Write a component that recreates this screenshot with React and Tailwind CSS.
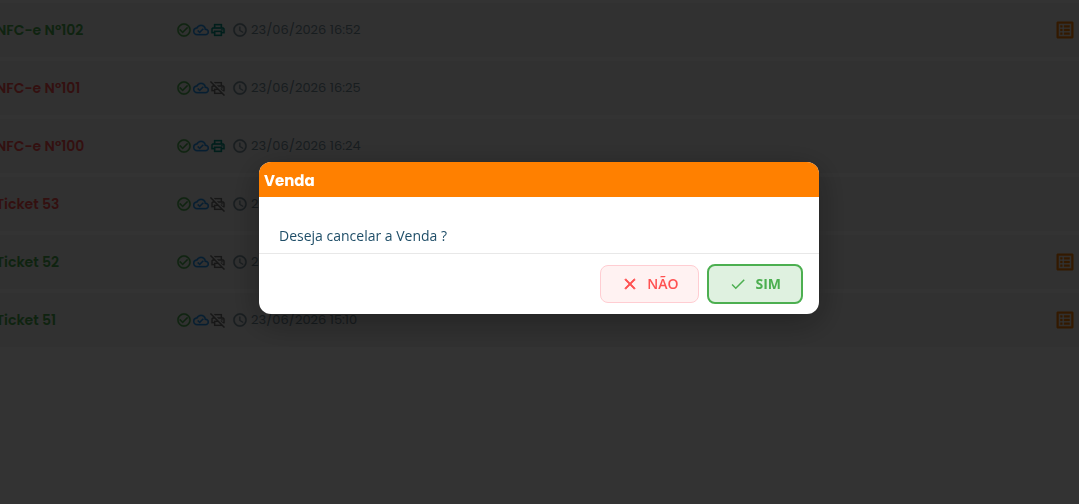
import React from "react";
import {
  MdAccessTime,
  MdCheck,
  MdCheckCircleOutline,
  MdClose,
  MdListAlt,
  MdOutlineCloudDone,
  MdOutlinePrint,
  MdOutlinePrintDisabled,
} from "react-icons/md";

const sales = [
  { name: "NFC-e Nº102", date: "23/06/2026 16:52", active: true, printed: true, list: true },
  { name: "NFC-e Nº101", date: "23/06/2026 16:25", active: false, printed: false, list: false },
  { name: "NFC-e Nº100", date: "23/06/2026 16:24", active: false, printed: true, list: false },
  { name: "Ticket 53", date: "23/06/2026 15:26", active: false, printed: false, list: false },
  { name: "Ticket 52", date: "23/06/2026 15:18", active: true, printed: false, list: true },
  { name: "Ticket 51", date: "23/06/2026 15:10", active: true, printed: false, list: true },
];

function SaleRow({ sale }) {
  return (
    <li className="flex items-center h-[54px] pr-[3px] bg-[#f5f5f5]">
      <span
        className={`w-[180px] shrink-0 text-sm font-semibold ${
          sale.active ? "text-[#4caf50]" : "text-[#ff5252]"
        }`}
      >
        {sale.name}
      </span>
      <div className="flex items-center gap-px">
        <MdCheckCircleOutline className="size-4 stroke-[0.5] text-[#4caf50]" />
        <MdOutlineCloudDone className="size-4 stroke-[0.5] text-[#2196f3]" />
        {sale.printed ? (
          <MdOutlinePrint className="size-4 stroke-[0.5] text-[#009688]" />
        ) : (
          <MdOutlinePrintDisabled className="size-4 stroke-[0.3] text-[#757575]" />
        )}
      </div>
      <div className="flex items-center gap-[3px] ml-1.5 text-[#78909c]">
        <MdAccessTime className="size-4 stroke-[0.5]" />
        <span className="text-[13px]">{sale.date}</span>
      </div>
      {sale.list && <MdListAlt className="size-[22px] ml-auto stroke-[0.5] text-[#ff8000]" />}
    </li>
  );
}

export default function App() {
  return (
    // the Md icons carry an empty bounding path, hidden so that strokes don't outline it
    <div className="min-h-screen overflow-hidden bg-white font-['Poppins','Inter',sans-serif] [&_path[fill=none]]:hidden">
      <ul className="flex flex-col gap-1 -ml-1 pt-[3px]">
        {sales.map((sale) => (
          <SaleRow key={sale.name} sale={sale} />
        ))}
      </ul>

      {/* Overlay */}
      <div className="fixed inset-0 flex items-center justify-center pr-px pb-7 bg-black/80">
        <div
          role="dialog"
          aria-labelledby="dialog-title"
          className="w-full max-w-[560px] rounded-xl overflow-hidden bg-white shadow-[0_8px_32px_rgba(0,0,0,0.35)]"
        >
          {/* Header */}
          <h2
            id="dialog-title"
            className="px-[5px] pt-[7px] pb-[5px] bg-[#ff8000] text-white text-[15px] leading-[23px] font-bold"
          >
            Venda
          </h2>

          {/* Message */}
          <p className="px-5 pt-7 pb-1.5 font-['Open_Sans',sans-serif] text-sm leading-[22px] text-[#1f4e68]">
            Deseja cancelar a Venda ?
          </p>

          {/* Actions */}
          <div className="flex items-center justify-end gap-2 px-4 py-2.5 border-t border-[#e8e8e8] font-['Open_Sans',sans-serif] text-sm">
            <button className="flex items-center gap-2 h-[38px] px-5 rounded-lg border border-[#ffcdd2] bg-[#fff2f2] font-semibold text-[#ff5252]">
              <MdClose className="size-[18px] stroke-1" />
              NÃO
            </button>
            <button className="flex items-center gap-2 h-10 px-5 rounded-lg border-2 border-[#4caf50] bg-[#dff1e0] font-bold text-[#4caf50]">
              <MdCheck className="size-[18px]" />
              SIM
            </button>
          </div>
        </div>
      </div>
    </div>
  );
}
